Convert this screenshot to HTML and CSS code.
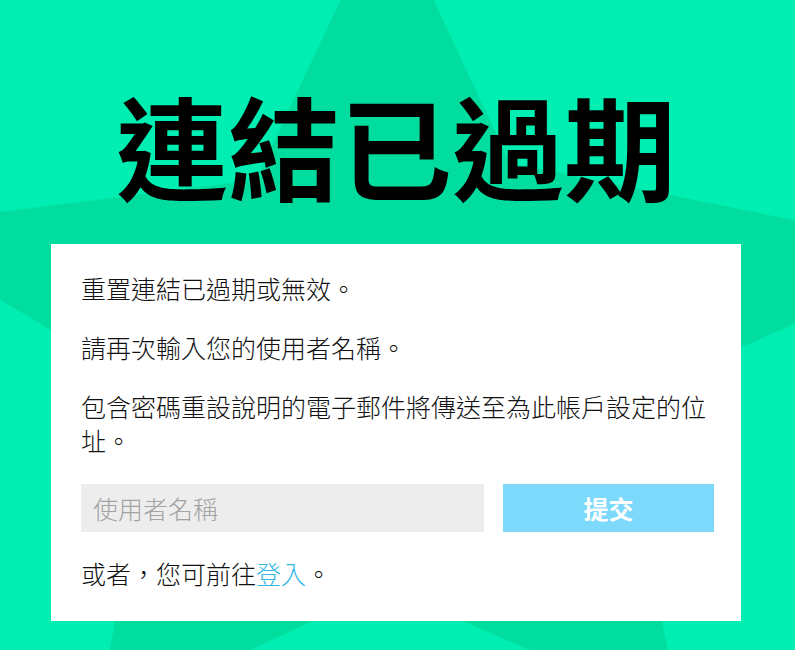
FILE: index.html
```html
<!DOCTYPE html>
<html lang="zh-Hant">
<head>
<meta charset="utf-8">
<title>連結已過期</title>
<link rel="stylesheet" href="styles.css">
</head>
<body>
<svg class="bg-star" viewBox="0 0 795 650" width="795" height="650" aria-hidden="true">
  <polygon points="387,-99 510,163 953,252 618,403 681,716 385,587 98,721 154,392 -121,227 256,180" />
</svg>
<main class="page">
  <h1 class="title">連結已過期</h1>
  <section class="card">
    <p class="msg">重置連結已過期或無效。</p>
    <p class="msg">請再次輸入您的使用者名稱。</p>
    <p class="msg">包含密碼重設說明的電子郵件將傳送至為此帳戶設定的位址。</p>
    <form class="form-row">
      <input class="username" type="text" placeholder="使用者名稱">
      <button class="submit" type="button">提交</button>
    </form>
    <p class="msg last">或者，您可前往<a class="link" href="#">登入</a>。</p>
  </section>
</main>
</body>
</html>
```

FILE: styles.css
```css
html, body {
  margin: 0;
  padding: 0;
}
body {
  width: 795px;
  height: 650px;
  overflow: hidden;
  background: #00eeb1;
  font-family: "Noto Sans CJK TC", "Noto Sans", sans-serif;
  color: #111;
  position: relative;
}
.bg-star {
  position: absolute;
  left: 0;
  top: 0;
  z-index: 0;
}
.bg-star polygon {
  fill: #00dd9e;
}
.page {
  position: relative;
  z-index: 1;
  display: flex;
  flex-direction: column;
  align-items: center;
  padding-top: 77px;
  padding-right: 3px;
}
.title {
  margin: 0;
  font-size: 112px;
  font-weight: 700;
  line-height: 134px;
  color: #000;
  letter-spacing: 0;
}
.card {
  margin-top: 33px;
  width: 690px;
  box-sizing: border-box;
  background: #fff;
  padding: 27px 30px 31px 30px;
}
.msg {
  margin: 0 0 25px 0;
  font-size: 25px;
  line-height: 34px;
  font-weight: 300;
}
.msg.last {
  margin-bottom: 0;
}
.form-row {
  display: grid;
  grid-template-columns: 403px 211px;
  column-gap: 19px;
  margin: 27px 0 24px 0;
}
.username {
  height: 48px;
  box-sizing: border-box;
  border: none;
  outline: none;
  background: #ededed;
  padding: 0 12px;
  font-family: inherit;
  font-size: 25px;
  font-weight: 300;
  color: #333;
}
.username::placeholder {
  color: #a3a3a3;
}
.submit {
  height: 48px;
  border: none;
  background: #7dd9fb;
  color: #fff;
  font-family: inherit;
  font-size: 25px;
  font-weight: 700;
  padding: 0;
}
.link {
  color: #2fb6e3;
  text-decoration: none;
}
```
